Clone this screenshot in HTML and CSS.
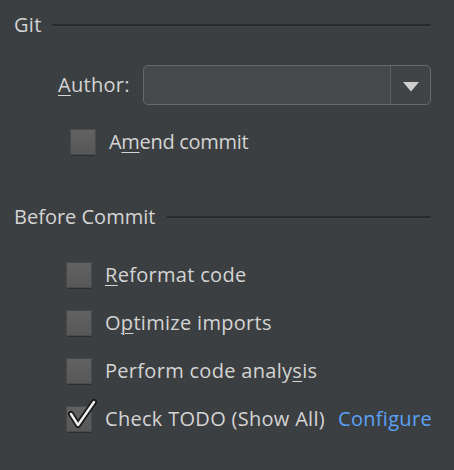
FILE: index.html
```html
<!DOCTYPE html>
<html>
<head>
<meta charset="utf-8">
<link rel="stylesheet" href="styles.css">
</head>
<body>
<div class="panel">
  <div class="section-head git-head">
    <span class="title">Git</span>
    <span class="rule"></span>
  </div>

  <div class="author-row">
    <label class="author-label"><u>A</u>uthor:</label>
    <div class="combo">
      <div class="combo-field"></div>
      <div class="combo-btn">
        <svg width="16" height="10" viewBox="0 0 16 10"><polygon points="0,0 16,0 8,9.5" fill="#d0d0d0"/></svg>
      </div>
    </div>
  </div>

  <div class="check-row amend">
    <span class="box"></span>
    <span class="label tight">A<u>m</u>end commit</span>
  </div>

  <div class="section-head before-head">
    <span class="title">Before Commit</span>
    <span class="rule"></span>
  </div>

  <div class="checks">
    <div class="check-row">
      <span class="box"></span>
      <span class="label"><u>R</u>eformat code</span>
    </div>
    <div class="check-row">
      <span class="box"></span>
      <span class="label">O<u>p</u>timize imports</span>
    </div>
    <div class="check-row">
      <span class="box"></span>
      <span class="label">Perform code analy<u>s</u>is</span>
    </div>
    <div class="check-row">
      <span class="box checked">
        <svg class="tick" width="34" height="32" viewBox="0 0 34 32">
          <polyline points="6,16 13,27 29,4" fill="none" stroke="#1a1a1a" stroke-width="6" stroke-linecap="round" stroke-linejoin="round"/>
          <polyline points="6,16 13,27 29,4" fill="none" stroke="#f0f0f0" stroke-width="2.4" stroke-linecap="round" stroke-linejoin="round"/>
        </svg>
      </span>
      <span class="label">Check TODO (Show All)</span>
      <a class="link">Configure</a>
    </div>
  </div>
</div>
</body>
</html>
```

FILE: styles.css
```css
html, body {
  margin: 0;
  padding: 0;
  background: #3c3f41;
}

body {
  width: 454px;
  height: 470px;
  overflow: hidden;
  font-family: "Open Sans", "Noto Sans", "Liberation Sans", sans-serif;
  font-size: 20px;
  letter-spacing: 0.3px;
  color: #d4d4d4;
  white-space: nowrap;
}

.panel {
  padding: 13px 23px 0 14px;
}

u {
  text-decoration: underline;
  text-underline-offset: 3px;
  text-decoration-thickness: 1px;
}

.section-head {
  display: flex;
  align-items: center;
  height: 24px;
  line-height: 24px;
}

.section-head .rule {
  flex: 1;
  height: 2px;
  background: #2a2a2a;
  border-bottom: 1px solid #444;
}

.git-head .rule {
  margin-left: 10px;
}

.before-head {
  margin-top: 50px;
}

.before-head .title {
  letter-spacing: 0;
}

.before-head .rule {
  margin-left: 12px;
}

.author-row {
  display: flex;
  align-items: center;
  margin-top: 28px;
  padding-left: 44px;
}

.author-label {
  width: 85px;
  line-height: 24px;
}

.combo {
  flex: 1;
  display: flex;
  height: 38px;
  border: 1px solid #686868;
  border-radius: 5px;
  background: #46494b;
}

.combo-field {
  flex: 1;
}

.combo-btn {
  width: 39px;
  border-left: 1px solid #5e5e5e;
  background: #414446;
  border-radius: 0 5px 5px 0;
  display: flex;
  align-items: center;
  justify-content: center;
}

.combo-btn svg {
  margin-top: 3px;
  margin-left: 1px;
}

.check-row {
  display: flex;
  align-items: center;
  height: 26px;
}

.amend {
  margin-top: 24px;
  padding-left: 56px;
}

.box {
  position: relative;
  width: 24px;
  height: 24px;
  border: 1px solid #4a4a4a;
  background: linear-gradient(#626262, #575757);
  box-shadow: 0 2px 0 -1px #2e2e2e;
  flex: none;
}

.check-row .label {
  margin-left: 13px;
  line-height: 24px;
}

.check-row .tight {
  letter-spacing: -0.3px;
}

.checks {
  margin-top: 33px;
  padding-left: 52px;
  display: flex;
  flex-direction: column;
  gap: 22px;
}

.tick {
  position: absolute;
  left: -2px;
  top: -9px;
}

.link {
  margin-left: 13px;
  color: #5ba2f8;
  line-height: 24px;
}
```
